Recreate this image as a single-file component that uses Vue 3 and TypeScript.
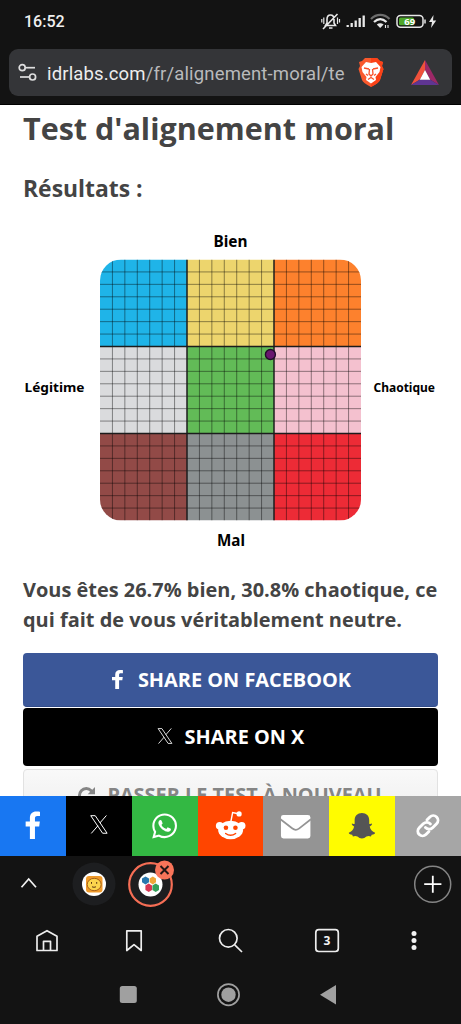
<script setup lang="ts">
const cells: string[] = [
  '#1fb4e8', '#edd56d', '#fd812d',
  '#dadbdd', '#62bb57', '#f4c1cf',
  '#924a47', '#8c9192', '#ed2b36',
]
const cell = 87
const minor: number[] = Array.from({ length: 21 }, (_, i) => i)
  .filter((i) => i % 7 !== 0)
  .map((i) => (i * cell) / 7)
</script>

<template>
  <div class="screen">
    <header class="top">
      <div class="status">
        <span class="clock">16:52</span>
        <svg class="status-icons" width="120" height="24" viewBox="318 10 120 24" fill="none" stroke="#e8e8e8">
          <path d="M325.500 25.500H335.500L334 23V19.500C334 16.500 332.500 15 330.500 15S327 16.500 327 19.500V23ZM329 28H332.500M323 29L337.500 14" stroke-width="1.600" />
          <path d="M323.800 17.500V24M321.800 19V22.500M337.500 17.500V24M339.500 19V22.500" stroke-width="1.200" />
          <path d="M347.700 25V27M351.700 23V27M355.700 20.500V27M359.700 18V27M363.700 15.500V27" stroke-width="2.300" />
          <path d="M371 19C376.500 13.600 384 13.600 389.500 19" stroke="#6d6d6d" stroke-width="2.300" />
          <path d="M374 22C378 18.300 382.500 18.300 386.500 22" stroke-width="2.300" />
          <path d="M376.800 24.500Q380.200 21.800 383.600 24.500L380.200 28Z" fill="#e8e8e8" stroke="none" />
          <path d="M385.500 25V28M388 25V28" stroke-width="1.100" />
          <rect x="397" y="15.600" width="26" height="11.600" rx="3.500" stroke-width="1.500" />
          <rect x="399" y="17.600" width="15" height="7.600" rx="1.500" fill="#4ea72a" stroke="none" />
          <path d="M425 19.500V23.500" stroke-width="1.500" />
          <text x="409.700" y="25" class="battery">69</text>
          <path d="M433.500 15L429 22H432L431 28L436.200 20.500H433Z" fill="#e8e8e8" stroke="none" />
        </svg>
      </div>
      <div class="address">
        <svg width="20" height="20" viewBox="0 0 20 20" fill="none" stroke="#dededf" stroke-width="1.700">
          <circle cx="4.200" cy="4.700" r="3" /><path d="M7.500 4.700H17" />
          <circle cx="14.600" cy="14" r="3" /><path d="M2 14H11.500" />
        </svg>
        <span class="url"><b>idrlabs.com</b>/fr/alignement-moral/te</span>
        <svg class="lion" width="26" height="31" viewBox="0 0 26 31">
          <path d="M7 1H19L22 4L25 5L24 9L25.500 12L22 23Q21 26 13 30Q5 26 4 23L.5 12L2 9L1 5L4 4Z" fill="#f9592d" />
          <path d="M13 1H19L22 4L25 5L24 9L25.500 12L22 23Q21 26 13 30Z" fill="#fb4218" />
          <path d="M8 5L13 6L18 5L22.500 10L21.500 15L17.500 20L18 23L13 26.500L8 23L8.500 20L4.500 15L3.500 10Z" fill="#fff" />
          <path d="M6 11L11 12M20 11L15 12M11.500 12L11 17L13 19L15 17L14.500 12M8 17L10 18.500M18 17L16 18.500M10 22.500L13 20.500L16 22.500" fill="none" stroke="#f9512a" stroke-width="1.300" />
        </svg>
        <svg class="bat" width="28" height="26" viewBox="0 0 28 26">
          <path d="M14 0L0 25L9 19.500L14 10Z" fill="#f0513b" />
          <path d="M14 0L28 25L19 19.500L14 10Z" fill="#9c2867" />
          <path d="M0 25H28L19 19.500H9Z" fill="#5f3592" />
          <path d="M14 10L8.800 19.700H19.200Z" fill="#fff" />
        </svg>
      </div>
    </header>

    <main class="page">
      <h1>Test d'alignement moral</h1>
      <h2>Résultats :</h2>
      <svg class="chart" width="461" height="330" viewBox="0 230 461 330">
        <defs><clipPath id="board"><rect x="100" y="259.500" width="261" height="261" rx="21" /></clipPath></defs>
        <g clip-path="url(#board)">
          <g transform="translate(100 259.500)">
            <rect v-for="(c, i) in cells" :key="i" :x="(i % 3) * cell" :y="Math.floor(i / 3) * cell" width="87" height="87" :fill="c" />
            <g stroke="#000" stroke-opacity=".5" stroke-width=".85">
              <path v-for="p in minor" :key="p" :d="`M${p} 0V261M0 ${p}H261`" />
            </g>
            <path d="M87 0V261M174 0V261M0 87H261M0 174H261" stroke="#1c1c1c" stroke-width="1.500" />
          </g>
        </g>
        <circle cx="270.400" cy="354.500" r="5" fill="#69176e" stroke="#210d28" stroke-width="1.400" />
        <g class="axis">
          <text x="213.500" y="246.500" font-size="15.500" textLength="34" lengthAdjust="spacingAndGlyphs">Bien</text>
          <text x="217" y="546" font-size="15.500" textLength="28" lengthAdjust="spacingAndGlyphs">Mal</text>
          <text x="24.500" y="392" font-size="13.200" textLength="60" lengthAdjust="spacingAndGlyphs">Légitime</text>
          <text x="373.500" y="392" font-size="13.200" textLength="61.500" lengthAdjust="spacingAndGlyphs">Chaotique</text>
        </g>
      </svg>
      <p class="verdict">Vous êtes 26.7% bien, 30.8% chaotique, ce<br />qui fait de vous véritablement neutre.</p>
      <div class="buttons">
        <button class="btn facebook">
          <svg width="11" height="19" viewBox="5.400 0 12.600 24" preserveAspectRatio="none"><path fill="#fff" d="M9.100 24V13.050H5.400V8.800H9.100V5.600C9.100 1.950 11.300 0 14.600 0C16.150 0 17.500.1 17.900.17V4.020H15.630C13.850 4.020 13.510 4.870 13.510 6.100V8.800H17.760L17.210 13.050H13.510V24Z" /></svg>
          <span>SHARE ON FACEBOOK</span>
        </button>
        <button class="btn x">
          <svg width="16" height="16" viewBox="0 0 18 19" fill="none" stroke="#fff" stroke-width="1"><path d="M.8.700H5.300L17.200 18.300H12.700ZM16.500.500L10 8M8 10.800L1.300 18.500" /></svg>
          <span>SHARE ON X</span>
        </button>
        <button class="btn retry">
          <svg width="19" height="19" viewBox="0 0 19 19"><path d="M14.700 13.500A6.800 6.800 0 1 1 14.200 4.700L16 6.500" fill="none" stroke="#858585" stroke-width="3" /><path d="M18 1V8.300H10.700Z" fill="#858585" /></svg>
          <span>PASSER LE TEST À NOUVEAU</span>
        </button>
      </div>
    </main>

    <nav class="share">
      <a class="s-fb"><svg viewBox="0 0 66 60"><path transform="translate(19.500 15.200) scale(1.150 1.150)" fill="#fff" d="M9.100 24V13.050H5.400V8.800H9.100V5.600C9.100 1.950 11.300 0 14.600 0C16.150 0 17.500.1 17.900.17V4.020H15.630C13.850 4.020 13.510 4.870 13.510 6.100V8.800H17.760L17.210 13.050H13.510V24Z" /></svg></a>
      <a class="s-x"><svg viewBox="0 0 66 60"><path transform="translate(24 18.700)" d="M.8.700H5.300L17.200 18.300H12.700ZM16.500.500L10 8M8 10.800L1.300 18.500" fill="none" stroke="#fff" stroke-width="1" /></svg></a>
      <a class="s-wa"><svg viewBox="0 0 66 60"><path transform="translate(20.200 17.200) scale(1.040)" fill="#fff" d="M17.472 14.382c-.297-.149-1.758-.867-2.030-.967-.273-.099-.471-.148-.67.15-.197.297-.767.966-.94 1.164-.173.199-.347.223-.644.075-.297-.15-1.255-.463-2.390-1.475-.883-.788-1.480-1.761-1.653-2.059-.173-.297-.018-.458.13-.606.134-.133.298-.347.446-.52.149-.174.198-.298.298-.497.099-.198.050-.371-.025-.52-.075-.149-.669-1.612-.916-2.207-.242-.579-.487-.5-.669-.51-.173-.008-.371-.01-.57-.01-.198 0-.52.074-.792.372-.272.297-1.040 1.016-1.040 2.479 0 1.462 1.065 2.875 1.213 3.074.149.198 2.096 3.200 5.077 4.487.709.306 1.262.489 1.694.625.712.227 1.360.195 1.871.118.571-.085 1.758-.719 2.006-1.413.248-.694.248-1.289.173-1.413-.074-.124-.272-.198-.57-.347m-5.421 7.403h-.004a9.870 9.870 0 0 1-5.031-1.378l-.361-.214-3.741.982.998-3.648-.235-.374a9.860 9.860 0 0 1-1.510-5.260c.001-5.450 4.436-9.884 9.888-9.884 2.640 0 5.122 1.030 6.988 2.898a9.825 9.825 0 0 1 2.893 6.994c-.003 5.450-4.437 9.884-9.885 9.884m8.413-18.297A11.815 11.815 0 0 0 12.050 0C5.495 0 .16 5.335.157 11.892c0 2.096.547 4.142 1.588 5.945L.057 24l6.305-1.654a11.882 11.882 0 0 0 5.683 1.448h.005c6.554 0 11.890-5.335 11.893-11.893a11.821 11.821 0 0 0-3.480-8.413z" /></svg></a>
      <a class="s-rd"><svg viewBox="0 0 66 60">
        <g fill="#fff"><circle cx="21.700" cy="29.500" r="3.800" /><circle cx="43.800" cy="29.500" r="3.800" /><ellipse cx="32.700" cy="33.800" rx="12.500" ry="9.200" /><circle cx="41.200" cy="17.600" r="2.600" /></g>
        <path d="M33 25L34.700 16.300L40.500 17.500" fill="none" stroke="#fff" stroke-width="1.400" />
        <circle cx="28" cy="31.500" r="2.300" fill="#ff4500" /><circle cx="37.500" cy="31.500" r="2.300" fill="#ff4500" />
        <path d="M27.700 37.200Q32.700 41 37.700 37.200" fill="none" stroke="#ff4500" stroke-width="1.400" stroke-linecap="round" />
      </svg></a>
      <a class="s-mail"><svg viewBox="0 0 66 60"><rect x="18" y="18.800" width="29.500" height="23.400" rx="2.500" fill="#fff" /><path d="M17.500 23L29.500 32.300Q32.800 34.800 36 32.300L48 23" fill="none" stroke="#949494" stroke-width="1.700" /></svg></a>
      <a class="s-snap"><svg viewBox="0 0 66 60"><path fill="#555" d="M33 16.800C37.500 16.800 40.300 19.700 40.300 24V27.500Q41.500 28 43 27.300Q43.800 28.500 40.800 30.300C41.500 33.500 43.500 35.800 46.200 36.400Q46.200 38 42.800 38.400L42 40.200Q39.500 39.500 37.500 40.300Q35.500 42.200 33 42.200T28.500 40.300Q26.500 39.500 24 40.200L23.200 38.400Q19.800 38 19.800 36.400C22.500 35.800 24.500 33.500 25.200 30.300Q22.200 28.500 23 27.300Q24.500 28 25.700 27.500V24C25.700 19.700 28.500 16.800 33 16.800Z" /></svg></a>
      <a class="s-link"><svg viewBox="0 0 66 60"><g transform="translate(21 17)" fill="none" stroke="#fff" stroke-width="2.900" stroke-linecap="round"><path d="M9.500 14.300A5 5 0 0 0 16.700 14.400L20.700 10.400A4.700 4.700 0 0 0 14 3.700L11 6.700" /><path d="M14.500 10.700A5 5 0 0 0 7.300 10.600L3.300 14.600A4.700 4.700 0 0 0 10 21.300L13 18.300" /></g></svg></a>
    </nav>

    <footer class="browser">
      <svg width="461" height="168" viewBox="0 856 461 168" fill="none">
        <path d="M21.500 887.300L28.700 879L36 887.300" stroke="#f2f2f2" stroke-width="1.700" />
        <circle cx="94" cy="884" r="21.500" fill="#1d1e20" />
        <circle cx="94" cy="884" r="12" fill="#fff" />
        <rect x="86" y="876" width="16.500" height="16.500" rx="3" fill="#ef9a2b" />
        <ellipse cx="94.200" cy="884.500" rx="7" ry="6.200" fill="#fbd44d" stroke="#a85f16" />
        <path d="M91.500 882V883.800M96.700 882V883.800M92 886.800Q94 887.800 96 886.800" stroke="#5b3511" stroke-width="1" />
        <circle cx="150.500" cy="884.500" r="21.300" fill="#1d1e20" stroke="#f66e55" stroke-width="2.200" />
        <circle cx="150.500" cy="884.500" r="12" fill="#fff" />
        <path d="M145.500 876.500L149 878.500V882.300L145.500 884.500L142 882.300V878.500Z" fill="#2877ae" />
        <path d="M152.800 876.500L156 878.500V882.300L152.800 884.500L149.600 882.300V878.500Z" fill="#efa638" />
        <path d="M148.700 883.500L152 885.500V890L148.700 892L145.400 890V885.500Z" fill="#d63652" />
        <path d="M155.700 883.500L159 885.500V890L155.700 892L152.400 890V885.500Z" fill="#35a05a" />
        <circle cx="164.500" cy="870" r="9.500" fill="#f97459" />
        <path d="M160.500 866L168.500 874M168.500 866L160.500 874" stroke="#231716" stroke-width="2" />
        <circle cx="432.700" cy="884.200" r="18" stroke="#858585" stroke-width="1.500" />
        <path d="M424.200 884.200H441.400M432.800 875.700V892.700" stroke="#fff" stroke-width="1.800" />
        <g stroke="#ededed" stroke-width="1.700" stroke-linejoin="round">
          <path d="M37 936.300L47 930.700L57 936.300V950.500H37ZM43.500 950V941.300H50.500V950" />
          <path d="M126.800 930.800H141.200V950.500L134 944.700L126.800 950.500Z" />
          <circle cx="228.300" cy="938.300" r="8.800" /><path d="M234.700 944.800L242 952" />
          <rect x="315.800" y="929.700" width="22.500" height="21.800" rx="3" />
        </g>
        <text x="327" y="945.300" class="count">3</text>
        <g fill="#f2f2f2"><circle cx="414" cy="933.500" r="2.500" /><circle cx="414" cy="940.500" r="2.500" /><circle cx="414" cy="947.600" r="2.500" /></g>
        <rect x="119.800" y="986" width="17" height="17" rx="2.500" fill="#a0a0a0" />
        <circle cx="228.500" cy="994.700" r="10.600" stroke="#a0a0a0" stroke-width="1.700" /><circle cx="228.500" cy="994.700" r="7.200" fill="#a0a0a0" />
        <path d="M320 994.700L336 985V1004.500Z" fill="#a0a0a0" />
      </svg>
    </footer>
  </div>
</template>

<style>
html, body { background: #131313; }
</style>
<style scoped>
.screen { width: 461px; height: 1024px; display: flex; flex-direction: column; overflow: hidden; background: #131313; font-family: "Open Sans", sans-serif; }
svg { display: block; flex: none; }
.top { height: 105px; box-sizing: border-box; flex: none; background: #131313; border-bottom: 1px solid #000; }
.status { height: 49px; display: flex; justify-content: space-between; padding: 10px 23px 0 24px; box-sizing: border-box; }
.clock { font: 500 16px/24px Roboto, sans-serif; color: #f0f0f0; letter-spacing: 0; }
.battery { font: 700 9.500px "Open Sans", sans-serif; fill: #fff; stroke: none; text-anchor: middle; }
.address { width: 443px; height: 47px; margin-left: 9px; box-sizing: border-box; border-radius: 9px; background: #343538; display: flex; align-items: center; padding-left: 9px; }
.url { margin-left: 9px; width: 298px; overflow: hidden; white-space: nowrap; font: 400 18.500px/26px Roboto, sans-serif; color: #b9babc; letter-spacing: .15px; padding-top: 2px; }
.url b { font-weight: 400; color: #ededee; }
.lion { margin-left: 13px; }
.bat { margin-left: 27px; }
.page { height: 690.500px; flex: none; overflow: hidden; background: #fff; color: #444; }
h1 { margin: 0; padding: 0 0 0 23px; font-size: 30.500px; line-height: 47px; font-weight: 700; white-space: nowrap; }
h2 { margin: 19px 0 0; padding-left: 23px; font-size: 22.900px; line-height: 36px; font-weight: 700; white-space: nowrap; }
.chart { margin-top: 23px; }
.axis { font-family: "Noto Sans", sans-serif; font-weight: 700; fill: #000; }
.verdict { margin: 15px 0 0 23px; font-size: 19.950px; line-height: 30px; font-weight: 700; white-space: nowrap; }
.buttons { width: 415px; margin: 18px 0 0 23px; display: flex; flex-direction: column; }
.btn { border: 0; padding: 0; border-radius: 4px; display: flex; align-items: center; justify-content: center; color: #fff; font: 700 19.900px/28px "Open Sans", sans-serif; white-space: nowrap; box-sizing: border-box; }
.facebook { height: 53.500px; background: #3b5798; border-bottom: 1px solid #304b89; gap: 15px; padding-left: 2px; padding-top: 2px; }
.facebook svg { margin-top: -2px; }
.x { height: 58px; margin-top: 1.500px; background: #000; gap: 12px; padding-bottom: 1px; }
.x svg { margin-top: -2px; }
.retry { height: 52px; margin-top: 3px; background: linear-gradient(#f9f9f9, #eeeeee); border: 1px solid #e2e2e2; color: #858585; gap: 11px; padding-right: 2px; }
.share { height: 60.500px; flex: none; display: grid; grid-template-columns: repeat(7, 1fr); }
.share a { display: block; }
.share svg { width: 100%; height: 100%; }
.s-fb { background: #1877f2; }
.s-x { background: #000; }
.s-wa { background: #33b843; }
.s-rd { background: #ff4500; }
.s-mail { background: #949494; }
.s-snap { background: #fffc00; }
.s-link { background: #a6a6a6; }
.browser { height: 168px; flex: none; }
.count { font: 700 12px "Open Sans", sans-serif; fill: #f2f2f2; text-anchor: middle; }
</style>
